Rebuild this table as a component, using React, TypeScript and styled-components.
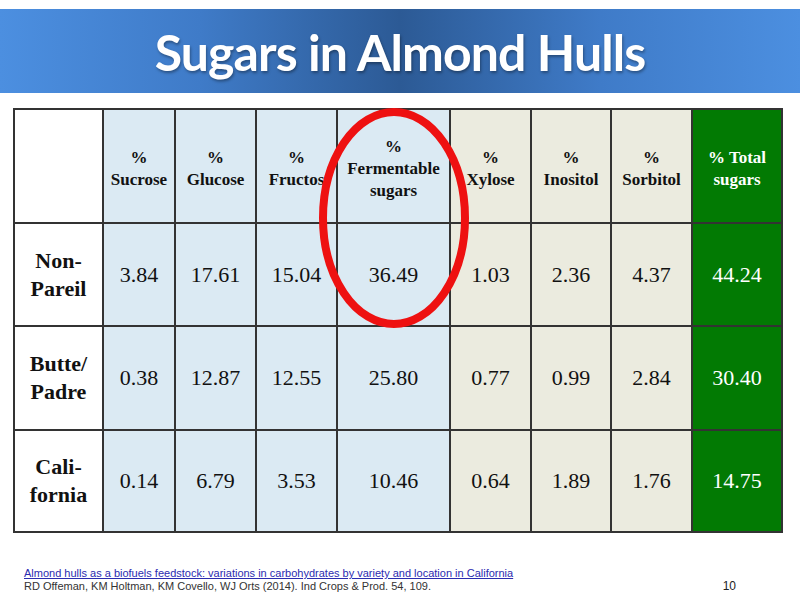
import React from "react";
import styled, { createGlobalStyle } from "styled-components";

const Global = createGlobalStyle`
  html, body { margin: 0; padding: 0; background: #ffffff; }
  body { width: 800px; height: 600px; overflow: hidden; }
`;

const Slide = styled.div`
  position: relative;
  width: 800px;
  height: 600px;
  background: #ffffff;
  display: flex;
  flex-direction: column;
`;

const Banner = styled.header`
  margin-top: 9px;
  height: 84px;
  display: flex;
  align-items: center;
  justify-content: center;
  background: linear-gradient(
    to right,
    #4c8fe0 0%,
    #3f7bc8 25%,
    #2c5a95 50%,
    #3f7bc8 75%,
    #4c8fe0 100%
  );
`;

const Title = styled.h1`
  margin: 0;
  font-family: Lato, "Open Sans", sans-serif;
  font-weight: 700;
  font-size: 50px;
  letter-spacing: -0.9px;
  color: #ffffff;
  text-shadow: 1px 2px 3px rgba(0, 0, 0, 0.35);
  line-height: 1;
  padding-top: 2px;
`;

const TableWrap = styled.div`
  position: relative;
  margin: 15px 0 0 13px;
  width: 772px;
`;

const Grid = styled.div`
  display: grid;
  grid-template-columns: 87px 70px 79px 79px 111px 79px 78px 79px 88px;
  grid-template-rows: 112px 101px 102px 100px;
  gap: 2px;
  padding: 2px;
  background: #333333;
  width: max-content;
`;

type Tone = "white" | "blue" | "beige" | "green";

const toneBg: Record<Tone, string> = {
  white: "#ffffff",
  blue: "#dbeaf3",
  beige: "#ebebdf",
  green: "#027a03",
};

const Cell = styled.div<{ $tone: Tone }>`
  background: ${(p) => toneBg[p.$tone]};
  color: ${(p) => (p.$tone === "green" ? "#ffffff" : "#111111")};
  display: flex;
  align-items: center;
  justify-content: center;
  text-align: center;
  font-family: "Liberation Serif", "Times New Roman", serif;
  overflow: hidden;
`;

const HeadText = styled.div`
  font-weight: 700;
  font-size: 17px;
  line-height: 22px;
  white-space: pre-line;
  padding-top: 6px;
`;

const LabelText = styled.div`
  font-weight: 700;
  font-size: 22px;
  line-height: 28px;
  white-space: pre-line;
`;

const Num = styled.div`
  font-size: 22px;
  line-height: 1;
`;

const Ellipse = styled.svg`
  position: absolute;
  left: 296px;
  top: -8px;
  width: 170px;
  height: 236px;
  pointer-events: none;
  overflow: visible;
`;

const Footer = styled.footer`
  display: flex;
  align-items: flex-end;
  justify-content: space-between;
  padding: 34px 64px 0 24px;
  font-family: "Liberation Sans", Arial, sans-serif;
  font-size: 11px;
  line-height: 13px;
`;

const Refs = styled.div`
  display: flex;
  flex-direction: column;
`;

const RefLink = styled.a`
  color: #2b2bb0;
  text-decoration: underline;
`;

const RefText = styled.span`
  color: #333333;
`;

const PageNum = styled.span`
  font-size: 12px;
  color: #222222;
`;

const headers: { text: string; tone: Tone }[] = [
  { text: "", tone: "white" },
  { text: "%\nSucrose", tone: "blue" },
  { text: "%\nGlucose", tone: "blue" },
  { text: "%\nFructos", tone: "blue" },
  { text: "%\nFermentable\nsugars", tone: "blue" },
  { text: "%\nXylose", tone: "beige" },
  { text: "%\nInositol", tone: "beige" },
  { text: "%\nSorbitol", tone: "beige" },
  { text: "% Total\nsugars", tone: "green" },
];

const tones: Tone[] = ["blue", "blue", "blue", "blue", "beige", "beige", "beige", "green"];

const rows: { label: string; values: string[] }[] = [
  { label: "Non-\nPareil", values: ["3.84", "17.61", "15.04", "36.49", "1.03", "2.36", "4.37", "44.24"] },
  { label: "Butte/\nPadre", values: ["0.38", "12.87", "12.55", "25.80", "0.77", "0.99", "2.84", "30.40"] },
  { label: "Cali-\nfornia", values: ["0.14", "6.79", "3.53", "10.46", "0.64", "1.89", "1.76", "14.75"] },
];

export default function App() {
  return (
    <Slide>
      <Global />
      <Banner>
        <Title>Sugars in Almond Hulls</Title>
      </Banner>
      <TableWrap>
        <Grid>
          {headers.map((h, i) => (
            <Cell key={`h${i}`} $tone={h.tone}>
              <HeadText>{h.text}</HeadText>
            </Cell>
          ))}
          {rows.map((r) => (
            <React.Fragment key={r.label}>
              <Cell $tone="white">
                <LabelText>{r.label}</LabelText>
              </Cell>
              {r.values.map((v, j) => (
                <Cell key={j} $tone={tones[j]}>
                  <Num>{v}</Num>
                </Cell>
              ))}
            </React.Fragment>
          ))}
        </Grid>
        <Ellipse viewBox="0 0 170 236">
          <ellipse cx="85" cy="118" rx="71" ry="106" fill="none" stroke="#ee1111" strokeWidth="8" />
        </Ellipse>
      </TableWrap>
      <Footer>
        <Refs>
          <RefLink href="#">
            Almond hulls as a biofuels feedstock: variations in carbohydrates by variety and location in California
          </RefLink>
          <RefText>RD Offeman, KM Holtman, KM Covello, WJ Orts (2014). Ind Crops &amp; Prod. 54, 109.</RefText>
        </Refs>
        <PageNum>10</PageNum>
      </Footer>
    </Slide>
  );
}
